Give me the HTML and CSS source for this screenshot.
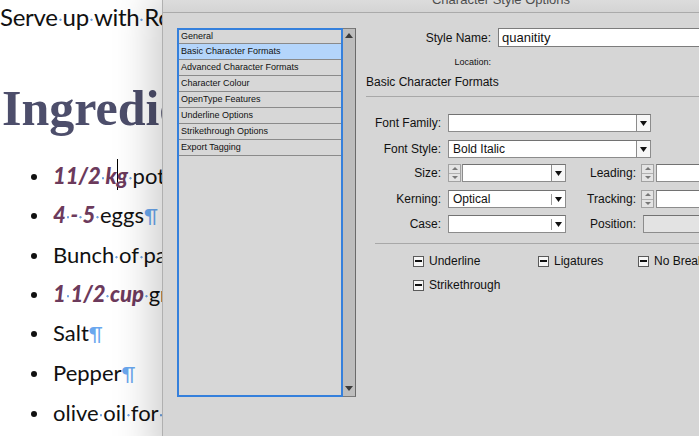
FILE: index.html
```html
<!DOCTYPE html>
<html>
<head>
<meta charset="utf-8">
<link rel="stylesheet" href="styles.css">
</head>
<body>
<div class="page">
  <p class="serve">Serve<i class="sp"></i>up<i class="sp"></i>with<i class="sp"></i>Rocket<i class="sp"></i>salad</p>
  <h1 class="ing">Ingredients</h1>
  <ul class="items">
    <li><b class="q">11/2<i class="sp"></i>k<i class="caret"></i>g</b><i class="sp"></i>potatoes</li>
    <li><b class="q">4<i class="sp"></i>-<i class="sp"></i>5</b><i class="sp"></i>eggs<span class="pil">¶</span></li>
    <li>Bunch<i class="sp"></i>of<i class="sp"></i>parsley</li>
    <li><b class="q">1<i class="sp"></i>1/2<i class="sp"></i>cup</b><i class="sp"></i>grated<i class="sp"></i>cheese</li>
    <li>Salt<span class="pil">¶</span></li>
    <li>Pepper<span class="pil">¶</span></li>
    <li>olive<i class="sp"></i>oil<i class="sp"></i>for<i class="sp"></i>frying</li>
  </ul>
</div>

<div class="dialog">
  <div class="titlebar"><div class="title">Character Style Options</div></div>
  <div class="dbody">
    <div class="listbox">
      <div class="list">
        <div class="item first">General</div>
        <div class="item sel-item">Basic Character Formats</div>
        <div class="item">Advanced Character Formats</div>
        <div class="item">Character Colour</div>
        <div class="item">OpenType Features</div>
        <div class="item">Underline Options</div>
        <div class="item">Strikethrough Options</div>
        <div class="item">Export Tagging</div>
      </div>
      <div class="scroll">
        <svg class="sarr" width="8" height="5" viewBox="0 0 8 5"><polygon points="0,5 8,5 4,0" fill="#3c3c3c"/></svg>
        <svg class="sarr" width="8" height="5" viewBox="0 0 8 5"><polygon points="0,0 8,0 4,5" fill="#3c3c3c"/></svg>
      </div>
    </div>

    <div class="rp">
      <div class="namerow">
        <span class="nlabel">Style Name:</span>
        <div class="nameinput">quanitity</div>
      </div>
      <div class="locrow"><span class="nlabel small">Location:</span></div>
      <div class="section">Basic Character Formats</div>
      <div class="hr"></div>

      <div class="frow r1">
        <span class="lab">Font Family:</span>
        <div class="sel wide"><span class="v"></span><span class="arr boxed"><svg width="7" height="5" viewBox="0 0 7 5"><polygon points="0,0 7,0 3.5,5" fill="#111"/></svg></span></div>
      </div>
      <div class="frow r2">
        <span class="lab">Font Style:</span>
        <div class="sel wide"><span class="v">Bold Italic</span><span class="arr boxed"><svg width="7" height="5" viewBox="0 0 7 5"><polygon points="0,0 7,0 3.5,5" fill="#111"/></svg></span></div>
      </div>
      <div class="frow r3">
        <span class="lab">Size:</span>
        <div class="spin"><span class="up"></span><span class="dn"></span></div>
        <div class="sel mid"><span class="v"></span><span class="arr boxed"><svg width="7" height="5" viewBox="0 0 7 5"><polygon points="0,0 7,0 3.5,5" fill="#111"/></svg></span></div>
        <span class="lab2">Leading:</span>
        <div class="spin s2"><span class="up"></span><span class="dn"></span></div>
        <div class="inp"></div>
      </div>
      <div class="frow r4">
        <span class="lab">Kerning:</span>
        <div class="sel half"><span class="v">Optical</span><span class="arr combo"><svg width="7" height="5" viewBox="0 0 7 5"><polygon points="0,0 7,0 3.5,5" fill="#111"/></svg></span></div>
        <span class="lab2">Tracking:</span>
        <div class="spin s2"><span class="up"></span><span class="dn"></span></div>
        <div class="inp"></div>
      </div>
      <div class="frow r5">
        <span class="lab">Case:</span>
        <div class="sel half"><span class="v"></span><span class="arr combo"><svg width="7" height="5" viewBox="0 0 7 5"><polygon points="0,0 7,0 3.5,5" fill="#111"/></svg></span></div>
        <span class="lab2">Position:</span>
        <div class="inp pos"></div>
      </div>

      <div class="hr hr2"></div>

      <div class="checks">
        <label class="chk c1"><span class="box"></span>Underline</label>
        <label class="chk c2"><span class="box"></span>Ligatures</label>
        <label class="chk"><span class="box"></span>No Break</label>
      </div>
      <div class="checks second">
        <label class="chk c1"><span class="box"></span>Strikethrough</label>
      </div>
    </div>
  </div>
</div>
</body>
</html>
```

FILE: styles.css
```css
html, body {
  margin: 0;
  padding: 0;
}
body {
  width: 699px;
  height: 436px;
  overflow: hidden;
  position: relative;
  background: #fff;
  font-family: Lato, "Open Sans", sans-serif;
  color: #111;
}

/* ---------- document page ---------- */
.page {
  white-space: nowrap;
}
.serve {
  margin: 2px 0 0 0;
  font-size: 24px;
  line-height: 30px;
  letter-spacing: -0.3px;
  color: #111;
}
.ing {
  margin: 48px 0 0 2px;
  font-family: "Liberation Serif", "Times New Roman", serif;
  font-weight: bold;
  font-size: 50px;
  line-height: 56px;
  color: #4d4e6b;
}
.items {
  list-style: none;
  margin: 20px 0 0 0;
  padding: 0 0 0 53px;
  font-size: 22px;
  line-height: 39px;
  color: #111;
}
.items li::before {
  content: "";
  display: inline-block;
  width: 6px;
  height: 6px;
  border-radius: 50%;
  background: #111;
  margin-left: -22px;
  margin-right: 16px;
  vertical-align: 4px;
}
.q {
  font-weight: 900;
  font-style: italic;
  color: #6c3a5c;
}
.sp {
  display: inline-block;
  width: 0.21em;
  height: 1em;
  background: radial-gradient(circle at 50% 74%, #6ea2e2 0, #6ea2e2 0.8px, rgba(110,162,226,0) 1.5px);
}
.pil {
  color: #6aa7ee;
  font-weight: normal;
  font-size: 20px;
}
.caret {
  display: inline-block;
  width: 0;
  height: 31px;
  border-left: 1px solid #000;
  margin-right: -1px;
  vertical-align: -6px;
}

/* ---------- dialog ---------- */
.dialog {
  position: absolute;
  left: 162px;
  top: 0;
  width: 676px;
  height: 460px;
  background: #d6d6d6;
  border-left: 1px solid #b0b0b0;
  box-shadow: -6px 0 38px 4px rgba(0, 0, 0, 0.2);
  font-family: "Liberation Sans", Arial, sans-serif;
  color: #111;
}
.titlebar {
  height: 12px;
  overflow: hidden;
  background: linear-gradient(#dcdcdc, #d4d4d4);
  border-bottom: 1px solid #aaaaaa;
}
.title {
  margin-top: -7px;
  line-height: 14px;
  font-size: 13px;
  text-align: center;
  color: #4e4e4e;
}
.dbody {
  display: flex;
  padding: 15px 0 0 14px;
}

/* list */
.listbox {
  display: flex;
  height: 369px;
}
.list {
  width: 162px;
  border: 2px solid #3580dc;
  background: #d7d7d7;
}
.item {
  height: 15px;
  line-height: 15px;
  border-bottom: 1px solid #8a8a8a;
  padding-left: 2px;
  font-size: 9px;
  color: #111;
}
.item.first {
  height: 13px;
  line-height: 13px;
}
.item.sel-item {
  background: #b4d5fb;
}
.scroll {
  width: 12px;
  border: 1px solid #7a7a7a;
  border-left: none;
  border-right-color: #6a6a6a;
  background: #bdbdbd;
  display: flex;
  flex-direction: column;
  justify-content: space-between;
  align-items: center;
  padding: 4px 0 5px;
}
.sarr {
  display: block;
}

/* right panel */
.rp {
  flex: 1;
  margin-left: 10px;
  font-size: 12px;
}
.namerow {
  display: flex;
  align-items: center;
  height: 19px;
}
.nlabel {
  width: 125px;
  text-align: right;
  margin-right: 7px;
  font-size: 12px;
}
.nlabel.small {
  font-size: 9px;
}
.nameinput {
  width: 300px;
  height: 19px;
  box-sizing: border-box;
  background: #fff;
  border: 1px solid #7c7c7c;
  padding-left: 3px;
  font-size: 13px;
  line-height: 18px;
}
.locrow {
  display: flex;
  height: 12px;
  line-height: 12px;
  margin-top: 9px;
}
.section {
  margin-top: 7px;
  height: 14px;
  line-height: 14px;
  font-size: 12px;
}
.hr {
  margin-top: 7px;
  height: 1px;
  background: #a8a8a8;
}
.hr2 {
  margin-top: 10px;
  margin-left: 9px;
}
.frow {
  display: flex;
  align-items: center;
  height: 18px;
}
.frow.r1 { margin-top: 17px; }
.frow.r2 { margin-top: 8px; }
.frow.r3 { margin-top: 6px; }
.frow.r4 { margin-top: 8px; }
.frow.r5 { margin-top: 7px; }
.lab {
  width: 75px;
  text-align: right;
  margin-right: 7px;
  flex: none;
}
.lab2 {
  width: 70px;
  text-align: right;
  margin-right: 5px;
  flex: none;
}
.sel {
  display: flex;
  height: 18px;
  box-sizing: border-box;
  border: 1px solid #8c8c8c;
  border-top-color: #727272;
  background: #fff;
  flex: none;
}
.sel.wide { width: 203px; }
.sel.mid { width: 104px; }
.sel.half { width: 118px; }
.sel .v {
  flex: 1;
  padding-left: 4px;
  line-height: 16px;
  font-size: 12px;
}
.arr {
  width: 13px;
  display: flex;
  align-items: center;
  justify-content: center;
}
.arr.boxed {
  border-left: 1px solid #8c8c8c;
  background: #f7f7f7;
}
.arr.combo {
  width: 14px;
  background: linear-gradient(#9c9c9c, #9c9c9c) left center / 1px 11px no-repeat, #fff;
}
.spin {
  width: 13px;
  height: 18px;
  box-sizing: border-box;
  border: 1px solid #a2a2a2;
  background: #e4e4e4;
  display: flex;
  flex-direction: column;
  margin-right: 1px;
  flex: none;
}
.spin.s2 {
  margin-right: 2px;
}
.spin .up, .spin .dn {
  flex: 1;
  display: flex;
  align-items: center;
  justify-content: center;
}
.spin .up {
  border-bottom: 1px solid #b0b0b0;
}
.spin .up::before {
  content: "";
  border-left: 3px solid transparent;
  border-right: 3px solid transparent;
  border-bottom: 3px solid #777;
}
.spin .dn::before {
  content: "";
  border-left: 3px solid transparent;
  border-right: 3px solid transparent;
  border-top: 3px solid #777;
}
.inp {
  width: 120px;
  height: 18px;
  box-sizing: border-box;
  border: 1px solid #8c8c8c;
  border-top-color: #727272;
  background: #fff;
  flex: none;
}
.inp.pos {
  margin-left: 2px;
  background: #e3e3e3;
}

/* checkboxes */
.checks {
  display: flex;
  align-items: center;
  height: 16px;
  margin-top: 9px;
  padding-left: 47px;
}
.checks.second {
  margin-top: 8px;
}
.chk {
  display: flex;
  align-items: center;
  font-size: 12px;
  white-space: nowrap;
  flex: none;
}
.chk.c1 { width: 125px; }
.chk.c2 { width: 100px; }
.box {
  width: 11px;
  height: 11px;
  box-sizing: border-box;
  border: 1px solid #5a5a5a;
  background: linear-gradient(#111, #111) center / 7px 2px no-repeat, #f6f6f6;
  margin-right: 5px;
  flex: none;
}
```
